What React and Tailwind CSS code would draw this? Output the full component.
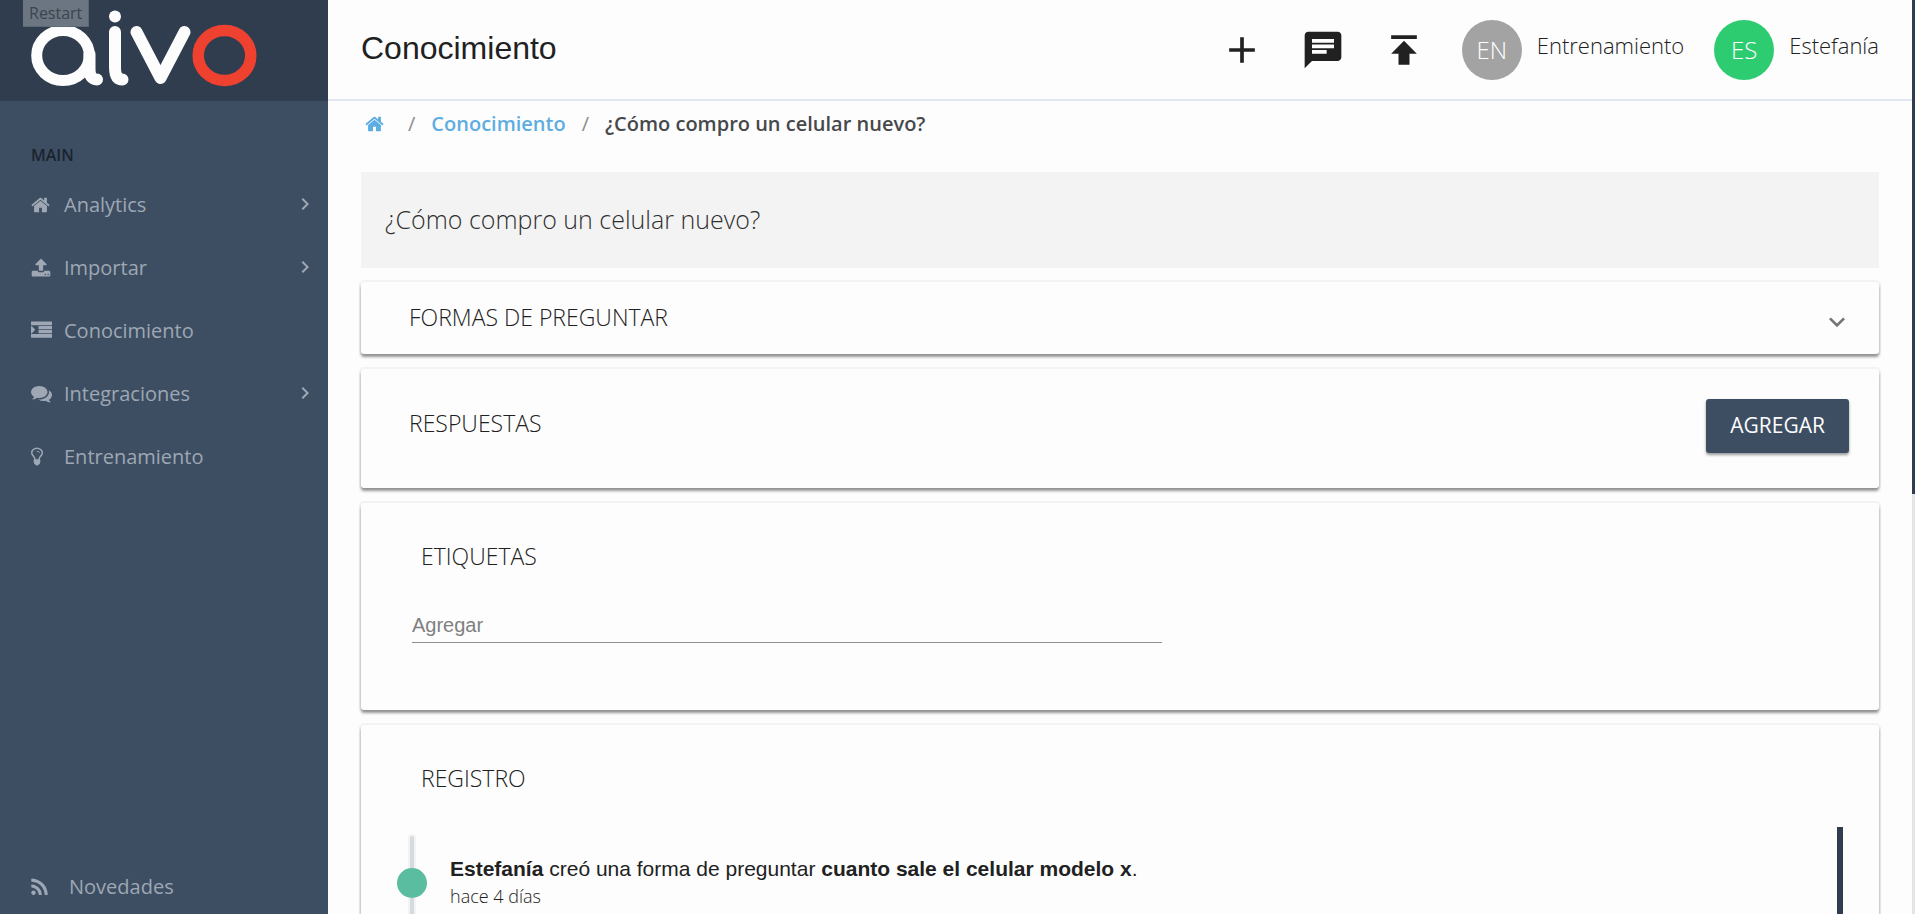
import { MdAdd, MdChat, MdPublish, MdExpandMore, MdChevronRight } from "react-icons/md";

const ICONS = {
  home: {
    box: "64 0 1664 1792",
    size: "w-[19px] h-5",
    d: "M1472 992v480q0 26-19 45t-45 19h-384v-384h-256v384h-384q-26 0-45-19t-19-45v-480q0-1 .5-3t.5-3l575-474 575 474q1 2 1 6zm223-69l-62 74q-8 9-21 11h-3q-13 0-21-7l-692-577-692 577q-12 8-24 7-13-2-21-11l-62-74q-8-10-7-23.5t11-21.5l719-599q32-26 76-26t76 26l244 204v-195q0-14 9-23t23-9h192q14 0 23 9t9 23v408l219 182q10 8 11 21.5t-7 23.5z",
  },
  upload: {
    box: "64 0 1664 1792",
    size: "w-[20px] h-5",
    d: "M1344 1472q0-26-19-45t-45-19-45 19-19 45 19 45 45 19 45-19 19-45zm256 0q0-26-19-45t-45-19-45 19-19 45 19 45 45 19 45-19 19-45zm128-224v320q0 40-28 68t-68 28h-1472q-40 0-68-28t-28-68v-320q0-40 28-68t68-28h427q21 56 70.5 92t110.5 36h256q61 0 110.5-36t70.5-92h427q40 0 68 28t28 68zm-325-648q-17 40-59 40h-256v448q0 26-19 45t-45 19h-256q-26 0-45-19t-19-45v-448h-256q-42 0-59-40-17-39 14-69l448-448q18-19 45-19t45 19l448 448q31 30 14 69z",
  },
  indent: {
    box: "0 0 1792 1792",
    size: "w-[21px] h-[21px]",
    d: "M352 832q0 14-9 23l-288 288q-9 9-23 9-32 0-32-32v-576q0-32 32-32 14 0 23 9l288 288q9 9 9 23zM1792 1216v256q0 32-32 32h-1728q-32 0-32-32v-256q0-32 32-32h1728q32 0 32 32zM1792 880v224q0 32-32 32h-1088q-32 0-32-32v-224q0-32 32-32h1088q32 0 32 32zM1792 536v224q0 32-32 32h-1088q-32 0-32-32v-224q0-32 32-32h1088q32 0 32 32zM1792 160v256q0 32-32 32h-1728q-32 0-32-32v-256q0-32 32-32h1728q32 0 32 32z",
  },
  comments: {
    box: "0 0 1792 1792",
    size: "w-[21px] h-[21px]",
    d: "M1408 768q0 139-94 257t-256.500 186.500-353.500 68.500q-86 0-176-16-124 88-278 128-36 9-86 16h-3q-11 0-20.500-8t-11.500-21q-1-3-1-6.500t.5-6.500 2-6l2.500-5 3.500-5.500 4-5 4.500-5 4-4.500q5-6 23-25t26-29.500 22.500-29 25-38.500 20.500-44q-124-72-195-177t-71-224q0-139 94-257t256.500-186.500 353.500-68.500 353.500 68.500 256.500 186.500 94 257zm384 256q0 120-71 224.500t-195 176.500q10 24 20.500 44t25 38.500 22.500 29 26 29.500 23 25q1 1 4 4.500t4.500 5 4 5 3.500 5.500l2.500 5 2 6 .5 6.500-1 6.500q-3 14-13 22t-22 7q-50-7-86-16-154-40-278-128-90 16-176 16-271 0-472-132 58 4 88 4 161 0 309-45t264-129q125-92 192-212t67-254q0-77-23-152 129 71 204 178t75 230z",
  },
  bulb: {
    box: "384 0 1024 1792",
    size: "w-3 h-[21px]",
    d: "M1120 576q0 13-9.500 22.500t-22.500 9.500-22.500-9.500-9.500-22.500q0-46-54-71t-106-25q-13 0-22.500-9.500t-9.500-22.500 9.500-22.500 22.500-9.500q50 0 99.500 16t87 54 37.500 90zm160 0q0-72-34.500-134t-90-101.500-123-62-136.500-22.500-136.500 22.500-123 62-90 101.500-34.500 134q0 101 68 180 10 11 30.500 33t30.500 33q128 153 141 298h228q13-145 141-298 10-11 30.500-33t30.500-33q68-79 68-180zm128 0q0 155-103 268-45 49-74.500 87t-59.500 95.500-34 107.500q47 28 47 82 0 37-25 64 25 27 25 64 0 52-45 81 13 23 13 47 0 46-31.500 71t-77.500 25q-20 44-60 70t-87 26-87-26-60-70q-46 0-77.500-25t-31.500-71q0-24 13-47-45-29-45-81 0-37 25-64-25-27-25-64 0-54 47-82-4-50-34-107.500t-59.500-95.500-74.500-87q-103-113-103-268 0-99 44.500-184.500t117-142 164-89 186.500-32.500 186.500 32.500 164 89 117 142 44.500 184.500z",
  },
  rss: {
    box: "192 0 1408 1792",
    size: "w-[17px] h-[21px]",
    d: "M576 1344q0 80-56 136t-136 56-136-56-56-136 56-136 136-56 136 56 56 136zm512 123q2 28-17 48-18 21-47 21h-135q-25 0-43-16.500t-20-41.500q-22-229-184.500-391.500t-391.500-184.500q-25-2-41.500-20t-16.500-43v-135q0-29 21-47 17-17 43-17h5q160 13 306 80.500t259 181.500q114 113 181.500 259t80.500 306zm512 2q2 27-18 47-18 20-46 20h-143q-26 0-44.500-17.500t-19.500-42.500q-12-215-101-408.500t-231.500-336-336-231.500-408.500-102q-25-1-42.500-19.500t-17.500-43.500v-143q0-28 20-46 18-18 44-18h3q262 13 501.500 120t425.500 294q187 186 294 425.500t120 501.500z",
  },
};

function Icon({ name }) {
  const icon = ICONS[name];
  return (
    <svg viewBox={icon.box} className={icon.size} fill="currentColor" aria-hidden="true">
      <path d={icon.d} />
    </svg>
  );
}

function Logo() {
  return (
    <svg viewBox="0 0 228 78" className="h-[78px] w-[228px]" fill="none" role="img" aria-label="aivo">
      <g stroke="#fdfdfd" strokeWidth="12" strokeLinecap="round" strokeLinejoin="round">
        <ellipse cx="32" cy="46.500" rx="26.300" ry="25" strokeWidth="11" />
        <path d="M58.500 45V60C58.500 67 61 70.500 66 70.500" />
        <path d="M84 23V58C84 66 86 70.500 91.500 70.500" />
        <path d="M105.500 23L129.500 69L153.500 23" />
      </g>
      <circle cx="84" cy="7.500" r="6" fill="#fdfdfd" />
      <ellipse cx="193.500" cy="46.500" rx="26.300" ry="25" stroke="#ef4130" strokeWidth="11.500" />
    </svg>
  );
}

const NAV = [
  { label: "Analytics", icon: "home", more: true },
  { label: "Importar", icon: "upload", more: true },
  { label: "Conocimiento", icon: "indent" },
  { label: "Integraciones", icon: "comments", more: true },
  { label: "Entrenamiento", icon: "bulb" },
];

function Sidebar() {
  return (
    <aside className="flex w-[328px] shrink-0 flex-col bg-[#3d4e63] text-[#9ea7b3]">
      <div className="relative flex h-[101px] shrink-0 items-start bg-[#303d4f] pt-[9px] pl-[31px]">
        <Logo />
        <span className="absolute top-0 left-[23px] border-r border-b border-[#5d6875] bg-[#6f7985]/95 px-[6px] text-base leading-[26px] text-[#3b444f]">
          Restart
        </span>
      </div>
      <h2 className="mt-11 px-[31px] text-base leading-5 font-semibold text-[#1a232e]">MAIN</h2>
      <nav className="mt-2 flex flex-col">
        {NAV.map((item) => (
          <a key={item.label} href="#" className="flex h-[63px] items-center pr-[11px] pl-[31px] text-xl">
            <span className="w-[33px]">
              <Icon name={item.icon} />
            </span>
            <span className="flex-1">{item.label}</span>
            {item.more && <MdChevronRight className="mb-[2px] h-6 w-6" />}
          </a>
        ))}
      </nav>
      <a href="#" className="mt-auto flex h-[54px] items-center pl-[31px] text-xl">
        <span className="w-[38px]">
          <Icon name="rss" />
        </span>
        Novedades
      </a>
    </aside>
  );
}

function Account({ initials, name, color }) {
  return (
    <button type="button" className="flex items-center gap-[15px]">
      <span className={`flex size-[60px] items-center justify-center rounded-full text-2xl font-light text-white ${color}`}>
        {initials}
      </span>
      <span className="pb-2 text-[22px] font-light">{name}</span>
    </button>
  );
}

function Header() {
  return (
    <header className="flex h-[101px] shrink-0 items-center border-b-2 border-[#e0e5ef] px-[33px] text-[#212121]">
      <h1 className="flex-1 pb-1 font-['Liberation_Sans',sans-serif] text-[32px]">Conocimiento</h1>
      <div className="mr-9 flex gap-[37px]">
        <button type="button" aria-label="Agregar contenido"><MdAdd className="size-11" /></button>
        <button type="button" aria-label="Mensajes"><MdChat className="size-11" /></button>
        <button type="button" aria-label="Publicar"><MdPublish className="size-11" /></button>
      </div>
      <div className="flex gap-[30px]">
        <Account initials="EN" name="Entrenamiento" color="bg-[#a3a3a3]" />
        <Account initials="ES" name="Estefanía" color="bg-[#2ecc71]" />
      </div>
    </header>
  );
}

const CARD = "rounded-[3px] bg-[#fdfdfd] shadow-[0_3px_3px_rgba(0,0,0,0.4),0_0_0_2px_rgba(0,0,0,0.04)]";
const TITLE = "text-[23px] leading-8 font-light text-[#212121]";

export default function App() {
  return (
    <div className="flex h-screen overflow-hidden bg-[#fdfdfd] font-['Open_Sans',sans-serif] text-[#212121]">
      <Sidebar />
      <div className="flex min-w-0 flex-1 flex-col">
        <Header />
        <main className="flex min-h-0 flex-1 flex-col overflow-hidden px-[33px]">
          <nav aria-label="Ruta" className="flex h-[46px] shrink-0 items-center pl-1 text-xl font-semibold">
            <a href="#" aria-label="Inicio" className="text-[#5dade2]"><Icon name="home" /></a>
            <span className="ml-6 font-normal text-[#8c8c8c]">/</span>
            <a href="#" className="ml-4 text-[#5dade2]">Conocimiento</a>
            <span className="mx-4 font-normal text-[#8c8c8c]">/</span>
            <span className="text-[#46484b]">¿Cómo compro un celular nuevo?</span>
          </nav>

          <div className="mt-[25px] flex h-24 shrink-0 items-center bg-[#f3f3f3] px-6 text-[25px] font-light text-[#303030]">
            ¿Cómo compro un celular nuevo?
          </div>

          <div className="mt-[14px] flex shrink-0 flex-col gap-[15px]">
            <button type="button" className={`${CARD} flex h-[72px] items-center justify-between pr-[26px] pl-12`}>
              <span className={`${TITLE} pb-[2px]`}>FORMAS DE PREGUNTAR</span>
              <MdExpandMore className="mt-2 size-8 text-[#757575]" />
            </button>

            <section className={`${CARD} flex h-[119px] items-start justify-between pt-[30px] pr-[30px] pl-12`}>
              <h2 className={`${TITLE} pt-2`}>RESPUESTAS</h2>
              <button type="button" className="h-[54px] rounded-[3px] bg-[#3d4e63] px-6 text-[21px] font-medium text-[#fdfdfd] shadow-[0_2px_3px_rgba(0,0,0,0.4)]">
                AGREGAR
              </button>
            </section>

            <section className={`${CARD} h-[207px] px-[51px] pt-[37px]`}>
              <h2 className={`${TITLE} pl-[9px]`}>
                <label htmlFor="tags">ETIQUETAS</label>
              </h2>
              <input
                id="tags"
                placeholder="Agregar"
                className="mt-[33px] h-[38px] w-[53%] border-b border-[#8f8f8f] bg-transparent pt-1 font-['Liberation_Sans',sans-serif] text-xl outline-none placeholder:text-[#808080]"
              />
            </section>

            <section className={`${CARD} h-[400px] pt-[37px] pr-9 pl-9`}>
              <h2 className={`${TITLE} pl-6`}>REGISTRO</h2>
              <div className="mt-[33px] flex h-[300px] justify-between">
                <ul className="mt-[9px] flex-1">
                  <li className="flex h-full gap-[23px]">
                    <span className="flex w-[30px] flex-col items-center">
                      <span className="h-8 w-1 rounded-t bg-[#d5dadd] ring-2 ring-[#f3f3f3]" />
                      <span className="z-10 size-[30px] shrink-0 rounded-full bg-[#5bbd9f]" />
                      <span className="w-1 flex-1 bg-[#d5dadd] ring-2 ring-[#f3f3f3]" />
                    </span>
                    <div className="pt-5">
                      <p className="font-['Liberation_Sans',sans-serif] text-[21px] leading-[26px]">
                        <b>Estefanía</b> creó una forma de preguntar <b>cuanto sale el celular modelo x</b>.
                      </p>
                      <p className="text-lg leading-7 font-light">hace 4 días</p>
                    </div>
                  </li>
                </ul>
                <div className="w-[6px] bg-[#303d4f]" />
              </div>
            </section>
          </div>
        </main>
      </div>
      <div className="w-[3px] shrink-0 bg-[#e4e4e4]">
        <div className="h-[54%] bg-[#303d4f]" />
      </div>
    </div>
  );
}
